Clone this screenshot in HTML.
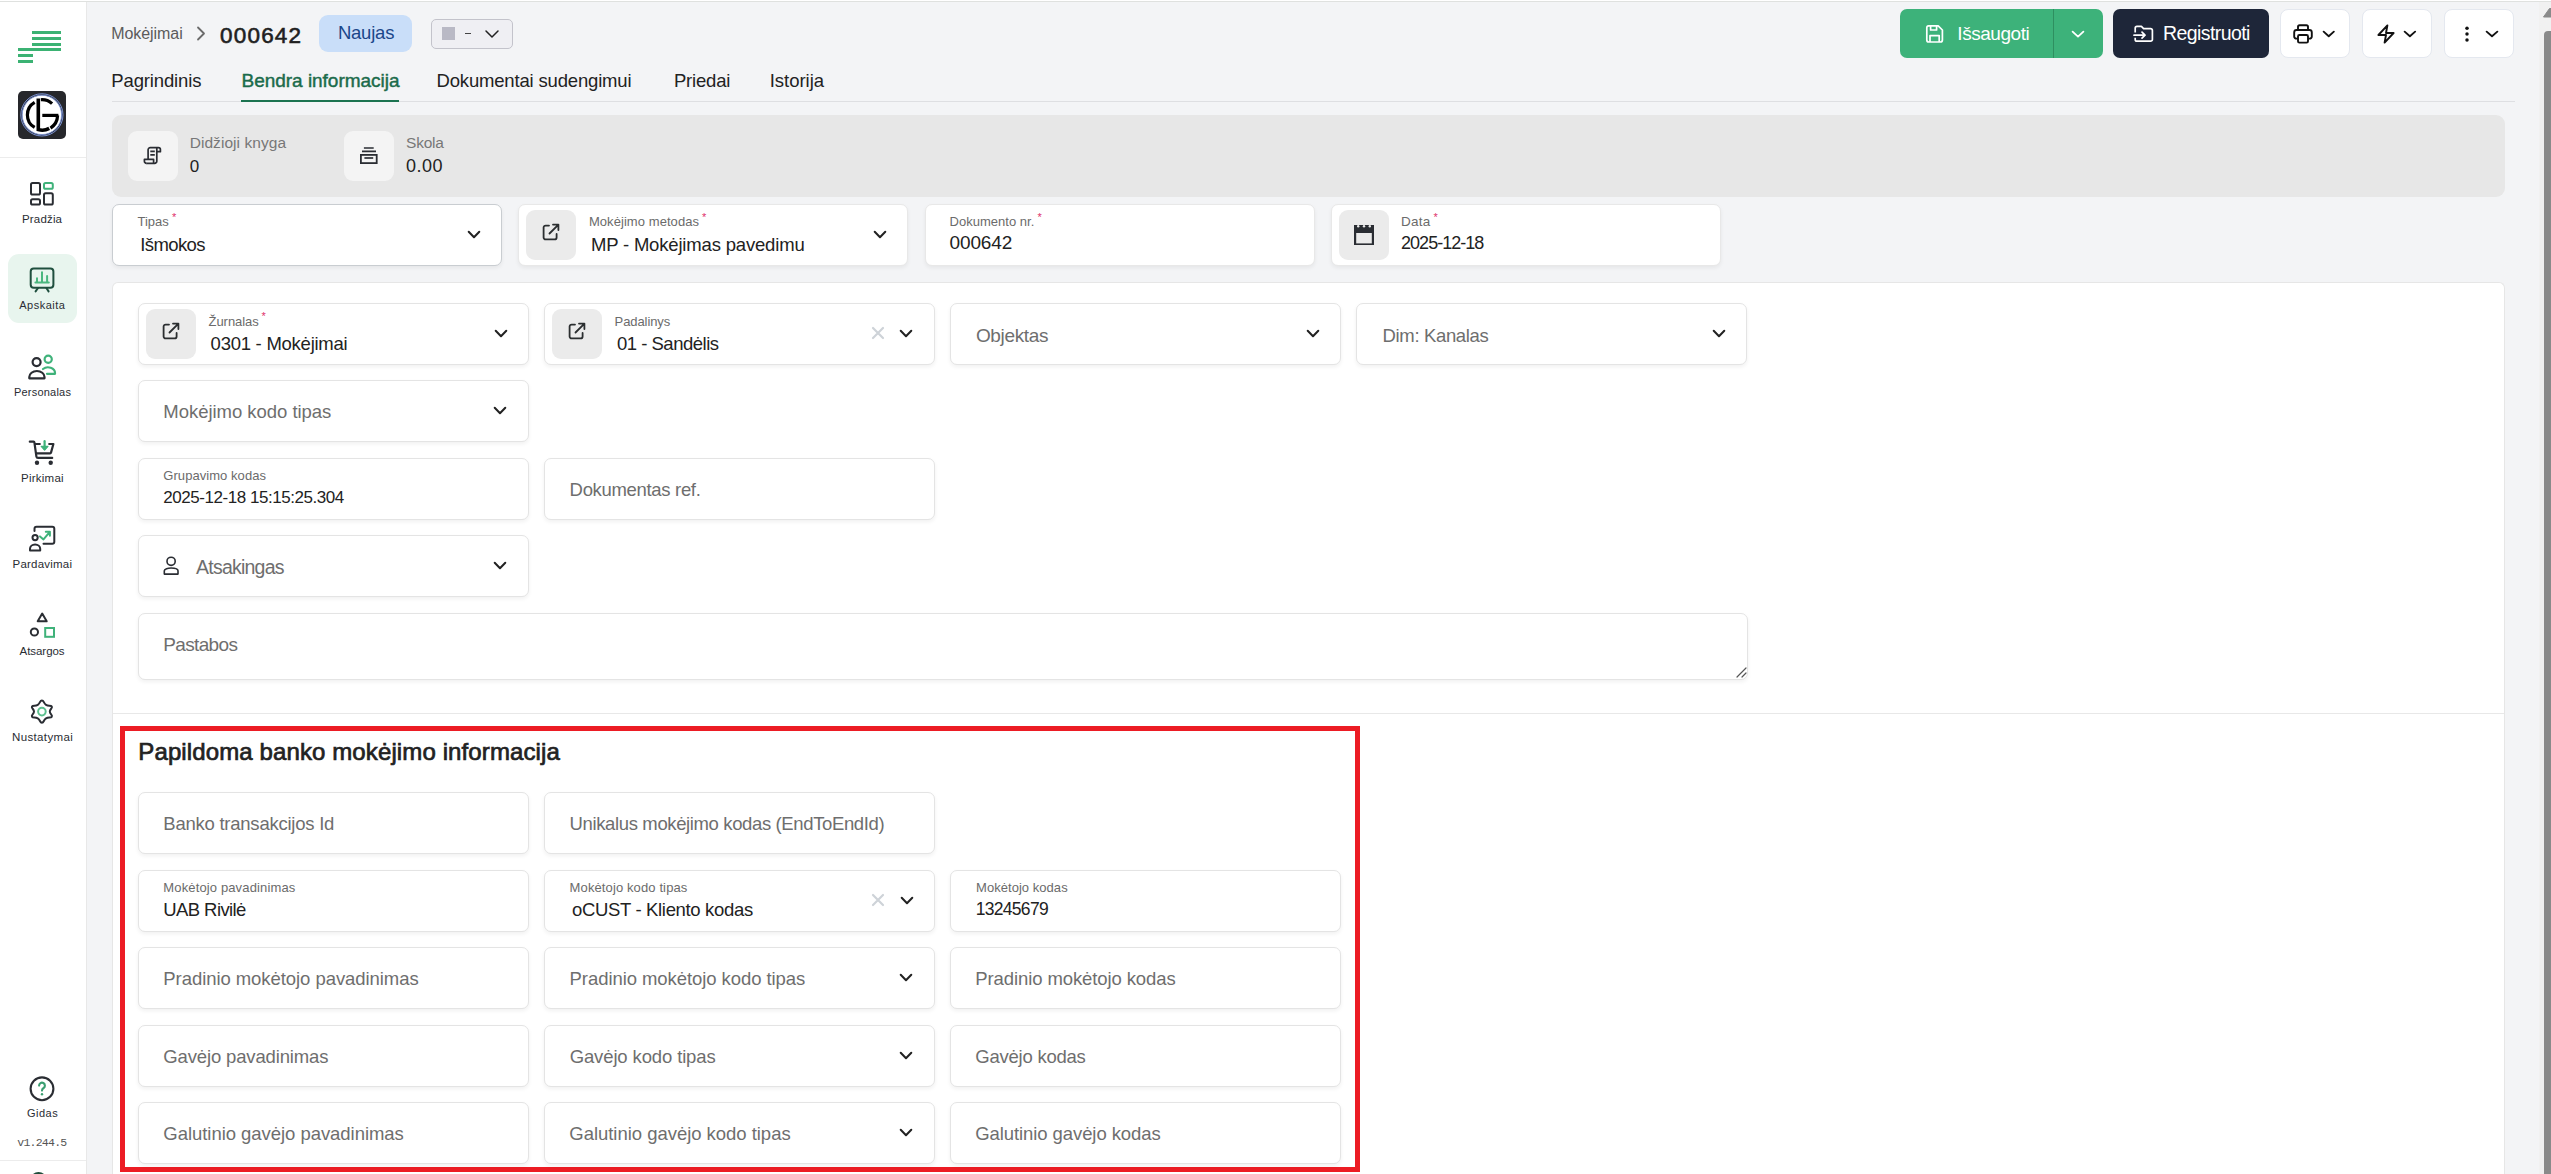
<!DOCTYPE html>
<html><head><meta charset="utf-8"><style>
html,body{margin:0;padding:0}
body{width:2551px;height:1174px;overflow:hidden;position:relative;background:#f3f4f6;font-family:"Liberation Sans",sans-serif}
body>div{position:absolute}
.t{position:absolute;white-space:nowrap}
</style></head><body>
<div style="left:0;top:0;width:2551px;height:1px;background:#fff"></div>
<div style="left:0;top:1px;width:2551px;height:1px;background:#dfe1df"></div>
<div style="left:0px;top:2px;width:86px;height:1172px;background:#fff"></div>
<div style="left:86px;top:2px;width:1px;height:1172px;background:#e8e8e8"></div>
<div style="left:0px;top:157px;width:86px;height:1px;background:#ececec"></div>
<div style="left:0px;top:1160px;width:86px;height:1px;background:#ececec"></div>
<div style="left:8px;top:254px;width:69px;height:69px;background:#e8f5ee;border-radius:11px"></div>
<span class="t" style="left:22.00px;top:212.90px;font-size:11.5px;line-height:12px;font-weight:400;letter-spacing:0.167px;color:#2a2d33">Pradžia</span>
<span class="t" style="left:19.20px;top:300.00px;font-size:11.0px;line-height:11px;font-weight:400;letter-spacing:0.514px;color:#2a2d33">Apskaita</span>
<span class="t" style="left:13.90px;top:386.50px;font-size:11.0px;line-height:11px;font-weight:400;letter-spacing:0.222px;color:#2a2d33">Personalas</span>
<span class="t" style="left:21.10px;top:471.90px;font-size:11.5px;line-height:12px;font-weight:400;letter-spacing:0.229px;color:#2a2d33">Pirkimai</span>
<span class="t" style="left:12.50px;top:557.90px;font-size:11.5px;line-height:12px;font-weight:400;letter-spacing:0.222px;color:#2a2d33">Pardavimai</span>
<span class="t" style="left:19.50px;top:645.20px;font-size:11.5px;line-height:12px;font-weight:400;letter-spacing:-0.043px;color:#2a2d33">Atsargos</span>
<span class="t" style="left:12.10px;top:731.00px;font-size:11.5px;line-height:12px;font-weight:400;letter-spacing:0.344px;color:#2a2d33">Nustatymai</span>
<span class="t" style="left:27.00px;top:1108.10px;font-size:11.0px;line-height:11px;font-weight:400;letter-spacing:0.500px;color:#2a2d33">Gidas</span>
<span class="t" style="left:17.30px;top:1137.00px;font-size:11.5px;line-height:12px;font-weight:400;letter-spacing:-0.757px;color:#555;font-family:'Liberation Mono',monospace">v1.244.5</span>
<span class="t" style="left:111.30px;top:25.50px;font-size:16.0px;line-height:16px;font-weight:400;letter-spacing:-0.075px;color:#5b5b5b">Mokėjimai</span>
<svg style="position:absolute;left:196px;top:26px;" width="11" height="15" viewBox="0 0 11 15" fill="none"><path d="M2 1.5 L8 7.5 L2 13.5" stroke="#6b6b6b" stroke-width="1.8" stroke-linecap="round" stroke-linejoin="round"/></svg>
<span class="t" style="left:220.00px;top:23.60px;font-size:22.5px;line-height:23px;font-weight:400;letter-spacing:1.200px;color:#1f1f1f;-webkit-text-stroke:0.6px #1f1f1f">000642</span>
<div style="left:319px;top:15px;width:93px;height:37px;background:#c9def9;border-radius:9px"></div>
<span class="t" style="left:337.90px;top:23.00px;font-size:18.5px;line-height:19px;font-weight:400;letter-spacing:-0.220px;color:#1b478a">Naujas</span>
<div style="left:431px;top:19px;width:80px;height:28px;background:#efeff3;border:1px solid #c3c3cb;border-radius:5px"></div>
<div style="left:442px;top:27px;width:13px;height:13px;background:#b9b9c5"></div>
<div style="left:465px;top:32.6px;width:6px;height:1.4px;background:#444"></div>
<svg style="position:absolute;left:484px;top:28px;" width="16" height="12" viewBox="0 0 16 12" fill="none"><path d="M2 3 L8 9 L14 3" stroke="#222" stroke-width="1.5" stroke-linecap="round" stroke-linejoin="round"/></svg>
<span class="t" style="left:111.30px;top:71.00px;font-size:18.5px;line-height:19px;font-weight:400;letter-spacing:-0.140px;color:#222">Pagrindinis</span>
<span class="t" style="left:241.50px;top:71.00px;font-size:19.0px;line-height:19px;font-weight:400;letter-spacing:-0.024px;color:#1b6b4b;-webkit-text-stroke:0.45px #1b6b4b">Bendra informacija</span>
<span class="t" style="left:436.50px;top:71.00px;font-size:18.5px;line-height:19px;font-weight:400;letter-spacing:-0.170px;color:#222">Dokumentai sudengimui</span>
<span class="t" style="left:673.90px;top:71.00px;font-size:18.5px;line-height:19px;font-weight:400;letter-spacing:-0.183px;color:#222">Priedai</span>
<span class="t" style="left:769.70px;top:71.00px;font-size:18.5px;line-height:19px;font-weight:400;letter-spacing:-0.014px;color:#222">Istorija</span>
<div style="left:112px;top:101px;width:2403px;height:1px;background:#dedfe2"></div>
<div style="left:241px;top:100px;width:158px;height:2px;background:#1b7350"></div>
<div style="left:1900px;top:9px;width:203px;height:49px;background:#3db27a;border-radius:7px"></div>
<div style="left:2053px;top:9px;width:1px;height:49px;background:#2e8f60"></div>
<span class="t" style="left:1957.30px;top:24.20px;font-size:19.0px;line-height:19px;font-weight:400;letter-spacing:-0.450px;color:#fff">Išsaugoti</span>
<div style="left:2113px;top:9px;width:156px;height:49px;background:#1e2639;border-radius:7px"></div>
<span class="t" style="left:2162.90px;top:23.20px;font-size:19.5px;line-height:20px;font-weight:400;letter-spacing:-0.570px;color:#fff">Registruoti</span>
<div style="left:2280px;top:9px;width:70px;height:49px;background:#fff;border:1px solid #e4e8ef;border-radius:8px;box-sizing:border-box"></div>
<div style="left:2362px;top:9px;width:70px;height:49px;background:#fff;border:1px solid #e4e8ef;border-radius:8px;box-sizing:border-box"></div>
<div style="left:2444px;top:9px;width:70px;height:49px;background:#fff;border:1px solid #e4e8ef;border-radius:8px;box-sizing:border-box"></div>
<div style="left:112px;top:115px;width:2393px;height:82px;background:#e7e7e7;border-radius:9px"></div>
<div style="left:128px;top:131px;width:50px;height:50px;background:#f4f4f4;border-radius:9px"></div>
<div style="left:344px;top:131px;width:50px;height:50px;background:#f4f4f4;border-radius:9px"></div>
<span class="t" style="left:189.70px;top:134.50px;font-size:15.5px;line-height:16px;font-weight:400;letter-spacing:0.054px;color:#777">Didžioji knyga</span>
<span class="t" style="left:189.70px;top:157.70px;font-size:17px;line-height:17px;font-weight:400;letter-spacing:0.000px;color:#222">0</span>
<span class="t" style="left:406.00px;top:134.50px;font-size:15.5px;line-height:16px;font-weight:400;letter-spacing:-0.200px;color:#777">Skola</span>
<span class="t" style="left:406.00px;top:156.70px;font-size:18.0px;line-height:18px;font-weight:400;letter-spacing:0.500px;color:#222">0.00</span>
<div style="left:112px;top:204px;width:390px;height:62px;background:#fff;border:1px solid #c9cdd1;border-radius:7px;box-sizing:border-box;box-shadow:0 2px 4px rgba(0,0,0,0.06);"></div>
<span class="t" style="left:137.50px;top:215.00px;font-size:13.0px;line-height:13px;font-weight:400;letter-spacing:-0.025px;color:#6b6b6b">Tipas</span>
<span class="t" style="left:140.20px;top:235.20px;font-size:18.5px;line-height:19px;font-weight:400;letter-spacing:-0.583px;color:#222">Išmokos</span>
<div style="left:518px;top:204px;width:390px;height:62px;background:#fff;border:1px solid #e8e8e8;border-radius:7px;box-sizing:border-box;box-shadow:0 2px 4px rgba(0,0,0,0.06);"></div>
<div style="left:526px;top:210px;width:50px;height:50px;background:#ebebeb;border-radius:9px"></div>
<span class="t" style="left:588.90px;top:215.00px;font-size:13.0px;line-height:13px;font-weight:400;letter-spacing:0.067px;color:#6b6b6b">Mokėjimo metodas</span>
<span class="t" style="left:590.90px;top:235.20px;font-size:18.5px;line-height:19px;font-weight:400;letter-spacing:-0.173px;color:#222">MP - Mokėjimas pavedimu</span>
<div style="left:925px;top:204px;width:390px;height:62px;background:#fff;border:1px solid #e8e8e8;border-radius:7px;box-sizing:border-box;box-shadow:0 2px 4px rgba(0,0,0,0.06);"></div>
<span class="t" style="left:949.60px;top:215.00px;font-size:13.0px;line-height:13px;font-weight:400;letter-spacing:0.017px;color:#6b6b6b">Dokumento nr.</span>
<span class="t" style="left:949.60px;top:233.30px;font-size:19.0px;line-height:19px;font-weight:400;letter-spacing:-0.160px;color:#222">000642</span>
<div style="left:1331px;top:204px;width:390px;height:62px;background:#fff;border:1px solid #e8e8e8;border-radius:7px;box-sizing:border-box;box-shadow:0 2px 4px rgba(0,0,0,0.06);"></div>
<div style="left:1339px;top:210px;width:50px;height:50px;background:#ebebeb;border-radius:9px"></div>
<span class="t" style="left:1401.00px;top:214.50px;font-size:13.5px;line-height:14px;font-weight:400;letter-spacing:0.267px;color:#6b6b6b">Data</span>
<span class="t" style="left:1401.00px;top:234.30px;font-size:18.0px;line-height:18px;font-weight:400;letter-spacing:-0.967px;color:#222">2025-12-18</span>
<div style="left:112px;top:282px;width:2393px;height:892px;background:#fff;border:1px solid #e6e6e6;border-bottom:none;box-sizing:border-box;border-radius:6px 6px 0 0"></div>
<div style="left:113px;top:713px;width:2391px;height:1px;background:#e8e8e8"></div>
<div style="left:138px;top:303px;width:391px;height:62px;background:#fff;border:1px solid #e4e4e4;border-radius:7px;box-sizing:border-box;box-shadow:0 2px 4px rgba(0,0,0,0.06);"></div>
<div style="left:146px;top:309px;width:50px;height:50px;background:#ebebeb;border-radius:9px"></div>
<span class="t" style="left:208.60px;top:314.70px;font-size:13.0px;line-height:13px;font-weight:400;letter-spacing:-0.071px;color:#6b6b6b">Žurnalas</span>
<span class="t" style="left:210.60px;top:334.40px;font-size:18.5px;line-height:19px;font-weight:400;letter-spacing:-0.253px;color:#222">0301 - Mokėjimai</span>
<div style="left:544px;top:303px;width:391px;height:62px;background:#fff;border:1px solid #e4e4e4;border-radius:7px;box-sizing:border-box;box-shadow:0 2px 4px rgba(0,0,0,0.06);"></div>
<div style="left:552px;top:309px;width:50px;height:50px;background:#ebebeb;border-radius:9px"></div>
<span class="t" style="left:614.60px;top:314.70px;font-size:13.0px;line-height:13px;font-weight:400;letter-spacing:-0.087px;color:#6b6b6b">Padalinys</span>
<span class="t" style="left:616.90px;top:334.40px;font-size:18.5px;line-height:19px;font-weight:400;letter-spacing:-0.483px;color:#222">01 - Sandėlis</span>
<div style="left:950px;top:303px;width:391px;height:62px;background:#fff;border:1px solid #e4e4e4;border-radius:7px;box-sizing:border-box;box-shadow:0 2px 4px rgba(0,0,0,0.06);"></div>
<span class="t" style="left:975.90px;top:325.50px;font-size:19.0px;line-height:19px;font-weight:400;letter-spacing:-0.343px;color:#6e6e6e">Objektas</span>
<div style="left:1356px;top:303px;width:391px;height:62px;background:#fff;border:1px solid #e4e4e4;border-radius:7px;box-sizing:border-box;box-shadow:0 2px 4px rgba(0,0,0,0.06);"></div>
<span class="t" style="left:1382.60px;top:325.50px;font-size:18.5px;line-height:19px;font-weight:400;letter-spacing:-0.355px;color:#6e6e6e">Dim: Kanalas</span>
<div style="left:138px;top:380px;width:391px;height:62px;background:#fff;border:1px solid #e4e4e4;border-radius:7px;box-sizing:border-box;box-shadow:0 2px 4px rgba(0,0,0,0.06);"></div>
<span class="t" style="left:163.30px;top:401.90px;font-size:18.5px;line-height:19px;font-weight:400;letter-spacing:-0.033px;color:#6e6e6e">Mokėjimo kodo tipas</span>
<div style="left:138px;top:458px;width:391px;height:62px;background:#fff;border:1px solid #e4e4e4;border-radius:7px;box-sizing:border-box;box-shadow:0 2px 4px rgba(0,0,0,0.06);"></div>
<span class="t" style="left:163.30px;top:469.10px;font-size:13.0px;line-height:13px;font-weight:400;letter-spacing:0.057px;color:#6b6b6b">Grupavimo kodas</span>
<span class="t" style="left:163.30px;top:489.10px;font-size:17.0px;line-height:17px;font-weight:400;letter-spacing:-0.459px;color:#222">2025-12-18 15:15:25.304</span>
<div style="left:544px;top:458px;width:391px;height:62px;background:#fff;border:1px solid #e4e4e4;border-radius:7px;box-sizing:border-box;box-shadow:0 2px 4px rgba(0,0,0,0.06);"></div>
<span class="t" style="left:569.60px;top:480.30px;font-size:18.5px;line-height:19px;font-weight:400;letter-spacing:-0.321px;color:#6e6e6e">Dokumentas ref.</span>
<div style="left:138px;top:535px;width:391px;height:62px;background:#fff;border:1px solid #e4e4e4;border-radius:7px;box-sizing:border-box;box-shadow:0 2px 4px rgba(0,0,0,0.06);"></div>
<span class="t" style="left:196.10px;top:556.90px;font-size:19.5px;line-height:20px;font-weight:400;letter-spacing:-0.778px;color:#6e6e6e">Atsakingas</span>
<div style="left:138px;top:613px;width:1610px;height:67px;background:#fff;border:1px solid #e4e4e4;border-radius:7px;box-sizing:border-box;box-shadow:0 2px 4px rgba(0,0,0,0.06);"></div>
<span class="t" style="left:163.30px;top:635.40px;font-size:19.0px;line-height:19px;font-weight:400;letter-spacing:-0.657px;color:#6e6e6e">Pastabos</span>
<div style="left:120px;top:726px;width:1240px;height:446px;border:5px solid #ec1c24;box-sizing:border-box"></div>
<span class="t" style="left:138.30px;top:739.50px;font-size:24.0px;line-height:24px;font-weight:400;letter-spacing:0.114px;color:#222;-webkit-text-stroke:0.7px #222">Papildoma banko mokėjimo informacija</span>
<div style="left:138px;top:792px;width:391px;height:62px;background:#fff;border:1px solid #e4e4e4;border-radius:7px;box-sizing:border-box;box-shadow:0 2px 4px rgba(0,0,0,0.06);"></div>
<span class="t" style="left:163.30px;top:814.40px;font-size:18.5px;line-height:19px;font-weight:400;letter-spacing:-0.240px;color:#6e6e6e">Banko transakcijos Id</span>
<div style="left:544px;top:792px;width:391px;height:62px;background:#fff;border:1px solid #e4e4e4;border-radius:7px;box-sizing:border-box;box-shadow:0 2px 4px rgba(0,0,0,0.06);"></div>
<span class="t" style="left:569.60px;top:814.40px;font-size:18.5px;line-height:19px;font-weight:400;letter-spacing:-0.371px;color:#6e6e6e">Unikalus mokėjimo kodas (EndToEndId)</span>
<div style="left:138px;top:870px;width:391px;height:62px;background:#fff;border:1px solid #e4e4e4;border-radius:7px;box-sizing:border-box;box-shadow:0 2px 4px rgba(0,0,0,0.06);"></div>
<span class="t" style="left:163.30px;top:881.10px;font-size:13.0px;line-height:13px;font-weight:400;letter-spacing:0.137px;color:#6b6b6b">Mokėtojo pavadinimas</span>
<span class="t" style="left:163.30px;top:899.70px;font-size:18.5px;line-height:19px;font-weight:400;letter-spacing:-0.589px;color:#222">UAB Rivilė</span>
<div style="left:544px;top:870px;width:391px;height:62px;background:#fff;border:1px solid #e4e4e4;border-radius:7px;box-sizing:border-box;box-shadow:0 2px 4px rgba(0,0,0,0.06);"></div>
<span class="t" style="left:569.60px;top:881.10px;font-size:13.0px;line-height:13px;font-weight:400;letter-spacing:0.117px;color:#6b6b6b">Mokėtojo kodo tipas</span>
<span class="t" style="left:572.00px;top:899.70px;font-size:18.5px;line-height:19px;font-weight:400;letter-spacing:-0.335px;color:#222">oCUST - Kliento kodas</span>
<div style="left:950px;top:870px;width:391px;height:62px;background:#fff;border:1px solid #e4e4e4;border-radius:7px;box-sizing:border-box;box-shadow:0 2px 4px rgba(0,0,0,0.06);"></div>
<span class="t" style="left:976.00px;top:881.10px;font-size:13.0px;line-height:13px;font-weight:400;letter-spacing:0.046px;color:#6b6b6b">Mokėtojo kodas</span>
<span class="t" style="left:975.70px;top:900.10px;font-size:17.5px;line-height:18px;font-weight:400;letter-spacing:-0.700px;color:#222">13245679</span>
<div style="left:138px;top:947px;width:391px;height:62px;background:#fff;border:1px solid #e4e4e4;border-radius:7px;box-sizing:border-box;box-shadow:0 2px 4px rgba(0,0,0,0.06);"></div>
<span class="t" style="left:163.30px;top:969.00px;font-size:18.5px;line-height:19px;font-weight:400;letter-spacing:-0.061px;color:#6e6e6e">Pradinio mokėtojo pavadinimas</span>
<div style="left:544px;top:947px;width:391px;height:62px;background:#fff;border:1px solid #e4e4e4;border-radius:7px;box-sizing:border-box;box-shadow:0 2px 4px rgba(0,0,0,0.06);"></div>
<span class="t" style="left:569.60px;top:969.00px;font-size:18.5px;line-height:19px;font-weight:400;letter-spacing:-0.070px;color:#6e6e6e">Pradinio mokėtojo kodo tipas</span>
<div style="left:950px;top:947px;width:391px;height:62px;background:#fff;border:1px solid #e4e4e4;border-radius:7px;box-sizing:border-box;box-shadow:0 2px 4px rgba(0,0,0,0.06);"></div>
<span class="t" style="left:975.30px;top:969.00px;font-size:18.5px;line-height:19px;font-weight:400;letter-spacing:-0.100px;color:#6e6e6e">Pradinio mokėtojo kodas</span>
<div style="left:138px;top:1025px;width:391px;height:62px;background:#fff;border:1px solid #e4e4e4;border-radius:7px;box-sizing:border-box;box-shadow:0 2px 4px rgba(0,0,0,0.06);"></div>
<span class="t" style="left:163.30px;top:1047.00px;font-size:18.5px;line-height:19px;font-weight:400;letter-spacing:-0.147px;color:#6e6e6e">Gavėjo pavadinimas</span>
<div style="left:544px;top:1025px;width:391px;height:62px;background:#fff;border:1px solid #e4e4e4;border-radius:7px;box-sizing:border-box;box-shadow:0 2px 4px rgba(0,0,0,0.06);"></div>
<span class="t" style="left:569.70px;top:1047.00px;font-size:18.5px;line-height:19px;font-weight:400;letter-spacing:-0.131px;color:#6e6e6e">Gavėjo kodo tipas</span>
<div style="left:950px;top:1025px;width:391px;height:62px;background:#fff;border:1px solid #e4e4e4;border-radius:7px;box-sizing:border-box;box-shadow:0 2px 4px rgba(0,0,0,0.06);"></div>
<span class="t" style="left:975.30px;top:1047.00px;font-size:18.5px;line-height:19px;font-weight:400;letter-spacing:-0.236px;color:#6e6e6e">Gavėjo kodas</span>
<div style="left:138px;top:1102px;width:391px;height:62px;background:#fff;border:1px solid #e4e4e4;border-radius:7px;box-sizing:border-box;box-shadow:0 2px 4px rgba(0,0,0,0.06);"></div>
<span class="t" style="left:163.30px;top:1124.40px;font-size:18.5px;line-height:19px;font-weight:400;letter-spacing:-0.041px;color:#6e6e6e">Galutinio gavėjo pavadinimas</span>
<div style="left:544px;top:1102px;width:391px;height:62px;background:#fff;border:1px solid #e4e4e4;border-radius:7px;box-sizing:border-box;box-shadow:0 2px 4px rgba(0,0,0,0.06);"></div>
<span class="t" style="left:569.30px;top:1124.40px;font-size:18.5px;line-height:19px;font-weight:400;letter-spacing:-0.031px;color:#6e6e6e">Galutinio gavėjo kodo tipas</span>
<div style="left:950px;top:1102px;width:391px;height:62px;background:#fff;border:1px solid #e4e4e4;border-radius:7px;box-sizing:border-box;box-shadow:0 2px 4px rgba(0,0,0,0.06);"></div>
<span class="t" style="left:975.30px;top:1124.40px;font-size:18.5px;line-height:19px;font-weight:400;letter-spacing:-0.086px;color:#6e6e6e">Galutinio gavėjo kodas</span>
<div style="left:32px;top:31.2px;width:29px;height:2.9px;background:#3bb273"></div>
<div style="left:32px;top:37px;width:29px;height:2.9px;background:#3bb273"></div>
<div style="left:32px;top:42.7px;width:29px;height:2.9px;background:#3bb273"></div>
<div style="left:18px;top:48.2px;width:43px;height:2.9px;background:#3bb273"></div>
<div style="left:18px;top:54.1px;width:15px;height:2.9px;background:#3bb273"></div>
<div style="left:18px;top:59.8px;width:15px;height:2.9px;background:#3bb273"></div>
<svg style="position:absolute;left:16px;top:89px;" width="52" height="52" viewBox="0 0 52 52" fill="none"><rect x="2" y="2" width="48" height="48" rx="5" fill="#26272b"/><circle cx="25.9" cy="25.9" r="21.1" stroke="#7d95d8" stroke-width="1"/><circle cx="25.9" cy="25.9" r="19.7" fill="#fff" stroke="#7d95d8" stroke-width="0.9"/><path d="M18.65 13.34 A14.5 14.5 0 0 0 18.65 38.46" stroke="#000" stroke-width="3.2"/><path d="M22.3 9.6 V40.6 Q28 42.2 33.2 39.4" stroke="#000" stroke-width="3.6"/><path d="M24.84 10.74 A15.2 15.2 0 0 1 36.07 14.6" stroke="#000" stroke-width="3.2"/><path d="M26.3 26.4 H42.4" stroke="#000" stroke-width="3.2"/><path d="M41.6 26.4 A15.8 15.8 0 0 1 34.5 39.15" stroke="#000" stroke-width="3.2"/></svg>
<svg style="position:absolute;left:26px;top:176px;" width="32" height="36" viewBox="0 0 32 36" fill="none"><rect x="5" y="7" width="9" height="11.6" rx="1.6" stroke="#2a2d33" stroke-width="2"/><rect x="5" y="23.2" width="9" height="5.4" rx="1.6" stroke="#2a2d33" stroke-width="2"/><rect x="18" y="7.1" width="8.8" height="5.7" rx="1.6" stroke="#3fb27a" stroke-width="2"/><rect x="18" y="17.3" width="8.8" height="11.3" rx="1.6" stroke="#2a2d33" stroke-width="2"/></svg>
<svg style="position:absolute;left:26px;top:262px;" width="32" height="36" viewBox="0 0 32 36" fill="none"><rect x="4.7" y="6.4" width="22.7" height="19.3" rx="3" stroke="#1f4f3e" stroke-width="2"/><path d="M12 26 L9.6 29.4 M20.4 26 L22.6 29.4" stroke="#1f4f3e" stroke-width="2" stroke-linecap="round"/><path d="M9.4 20.4 H22.8 M11 20.4 V16.3 M16 20.4 V10.2 M21.1 20.4 V14" stroke="#4bb77f" stroke-width="2" stroke-linecap="round"/></svg>
<svg style="position:absolute;left:26px;top:350px;" width="34" height="34" viewBox="0 0 34 34" fill="none"><circle cx="10.6" cy="12.1" r="4" stroke="#2a2d33" stroke-width="2.2"/><path d="M3.3 28.3 V27 A7.6 6 0 0 1 18.5 27 V28.3 Z" stroke="#2a2d33" stroke-width="2.2" stroke-linejoin="round"/><circle cx="22.2" cy="9.3" r="3.6" stroke="#3fb27a" stroke-width="2.2"/><path d="M17 19 A7 5.6 0 0 1 29 23 V23.8 H21" stroke="#3fb27a" stroke-width="2.2" stroke-linejoin="round" stroke-linecap="round"/></svg>
<svg style="position:absolute;left:26px;top:436px;" width="34" height="32" viewBox="0 0 34 32" fill="none"><path d="M3.8 5.7 H7.6 A0.8 0.8 0 0 1 8.4 6.4 L10.4 20.6 A1.6 1.6 0 0 0 12 21.9 H26.2" stroke="#2a2d33" stroke-width="2.2" stroke-linecap="round" stroke-linejoin="round"/><path d="M9.5 8 H13.8 M23.2 8 H27.4 L25 16.6 A1 1 0 0 1 24 17.3 H10.5" stroke="#2a2d33" stroke-width="2.2" stroke-linecap="round" stroke-linejoin="round"/><circle cx="11" cy="26.8" r="2.2" fill="#2a2d33"/><circle cx="24.7" cy="26.8" r="2.2" fill="#2a2d33"/><path d="M18.6 5.2 V13" stroke="#3fb27a" stroke-width="2.2" stroke-linecap="round"/><path d="M15.2 10.4 L18.6 14 L22 10.4 Z" fill="#3fb27a" stroke="#3fb27a" stroke-width="1.2" stroke-linejoin="round"/></svg>
<svg style="position:absolute;left:26px;top:520px;" width="34" height="34" viewBox="0 0 34 34" fill="none"><path d="M8.5 11 V8.8 A2 2 0 0 1 10.5 6.8 H26.3 A2 2 0 0 1 28.3 8.8 V21.8 A2 2 0 0 1 26.3 23.8 H17.5" stroke="#2a2d33" stroke-width="2" stroke-linecap="round"/><circle cx="9.1" cy="17.6" r="2.6" stroke="#2a2d33" stroke-width="2"/><path d="M4 30.4 V28.8 A5.1 4.4 0 0 1 14.2 28.8 V30.4 Z" stroke="#2a2d33" stroke-width="2" stroke-linejoin="round"/><path d="M14 16.4 L17.5 19.4 L23.6 12.2 M19.8 11.8 H23.9 V15.8" stroke="#3fb27a" stroke-width="2" stroke-linecap="round" stroke-linejoin="round"/></svg>
<svg style="position:absolute;left:26px;top:606px;" width="34" height="34" viewBox="0 0 34 34" fill="none"><path d="M16.2 7.6 L20.7 15.3 H11.7 Z" stroke="#2a2d33" stroke-width="2" stroke-linejoin="round"/><circle cx="8.4" cy="26" r="3.6" stroke="#2a2d33" stroke-width="2"/><rect x="19.2" y="22" width="8.8" height="8.8" stroke="#3fb27a" stroke-width="2"/></svg>
<svg style="position:absolute;left:26px;top:695px;" width="32" height="32" viewBox="0 0 32 32" fill="none"><path d="M15.90 5.50 C18.10 5.50 17.39 8.25 20.03 9.86 C22.67 11.48 24.78 9.76 25.79 11.56 C26.80 13.36 23.80 13.91 23.80 16.60 C23.80 19.29 26.80 19.84 25.79 21.64 C24.78 23.44 22.67 21.72 20.03 23.34 C17.39 24.95 18.10 27.70 15.90 27.70 C13.70 27.70 14.41 24.95 11.77 23.34 C9.13 21.72 7.02 23.44 6.01 21.64 C5.00 19.84 8.00 19.29 8.00 16.60 C8.00 13.91 5.00 13.36 6.01 11.56 C7.02 9.76 9.13 11.48 11.77 9.86 C14.41 8.25 13.70 5.50 15.90 5.50 Z" stroke="#2a2d33" stroke-width="2" stroke-linejoin="round"/><circle cx="15.9" cy="16.6" r="3.8" stroke="#5cc08f" stroke-width="2"/></svg>
<svg style="position:absolute;left:26px;top:1073px;" width="32" height="32" viewBox="0 0 32 32" fill="none"><circle cx="16" cy="15.8" r="11.4" stroke="#2a2d33" stroke-width="2.1"/><path d="M13.1 12.6 A2.9 2.9 0 1 1 17.6 15 C16.4 15.7 16 16.3 16 17.6" stroke="#3a9e71" stroke-width="2.1" stroke-linecap="round"/><circle cx="16" cy="21.2" r="1.2" fill="#3a9e71"/></svg>
<div style="left:30px;top:1172px;width:17px;height:10px;background:#1f4d3a;border-radius:9px 9px 0 0"></div>
<svg style="position:absolute;left:140px;top:143px;" width="24" height="24" viewBox="0 0 24 24" fill="none"><path d="M8.1 16.4 V6.8 A2.2 2.2 0 0 1 10.3 4.6 H18.4 A2 2 0 0 1 20.4 6.6 V8.7 H16.8" stroke="#2a2d33" stroke-width="1.7" stroke-linejoin="round"/><path d="M16.8 5 V18.2 A2.1 2.1 0 0 1 14.7 20.3 H6.3" stroke="#2a2d33" stroke-width="1.7"/><path d="M13.6 20.3 V16.4 H4.4 V18.2 A2.1 2.1 0 0 0 6.5 20.3" stroke="#2a2d33" stroke-width="1.7" stroke-linejoin="round"/><path d="M10.3 8.4 H14.8 M10.3 11.8 H14.8" stroke="#2a2d33" stroke-width="1.7"/></svg>
<svg style="position:absolute;left:356px;top:143px;" width="26" height="24" viewBox="0 0 26 24" fill="none"><path d="M7.9 5 H17.7 M6 8.3 H20" stroke="#2a2d33" stroke-width="1.7"/><rect x="4.9" y="11.9" width="15.8" height="8.2" stroke="#2a2d33" stroke-width="1.8"/><path d="M8.4 15 H17.2" stroke="#2a2d33" stroke-width="1.7"/></svg>
<svg style="position:absolute;left:542px;top:223px;" width="18" height="18" viewBox="0 0 18 18" fill="none"><path d="M7 2.6 H3.6 A2 2 0 0 0 1.6 4.6 V14.4 A2 2 0 0 0 3.6 16.4 H12.6 A2 2 0 0 0 14.6 14.4 V11" stroke="#2b2e30" stroke-width="1.8" stroke-linecap="round"/><path d="M7.5 10.5 L16.2 1.8 M11 1.6 H16.4 V7" stroke="#2b2e30" stroke-width="1.8" stroke-linecap="round" stroke-linejoin="round"/></svg>
<svg style="position:absolute;left:162px;top:322px;" width="18" height="18" viewBox="0 0 18 18" fill="none"><path d="M7 2.6 H3.6 A2 2 0 0 0 1.6 4.6 V14.4 A2 2 0 0 0 3.6 16.4 H12.6 A2 2 0 0 0 14.6 14.4 V11" stroke="#2b2e30" stroke-width="1.8" stroke-linecap="round"/><path d="M7.5 10.5 L16.2 1.8 M11 1.6 H16.4 V7" stroke="#2b2e30" stroke-width="1.8" stroke-linecap="round" stroke-linejoin="round"/></svg>
<svg style="position:absolute;left:568px;top:322px;" width="18" height="18" viewBox="0 0 18 18" fill="none"><path d="M7 2.6 H3.6 A2 2 0 0 0 1.6 4.6 V14.4 A2 2 0 0 0 3.6 16.4 H12.6 A2 2 0 0 0 14.6 14.4 V11" stroke="#2b2e30" stroke-width="1.8" stroke-linecap="round"/><path d="M7.5 10.5 L16.2 1.8 M11 1.6 H16.4 V7" stroke="#2b2e30" stroke-width="1.8" stroke-linecap="round" stroke-linejoin="round"/></svg>
<svg style="position:absolute;left:1354px;top:225px;" width="20" height="20" viewBox="0 0 20 20" fill="none"><rect x="1" y="1.2" width="18" height="6.8" fill="#2a2d33"/><rect x="1" y="1.2" width="18" height="18.4" stroke="#2a2d33" stroke-width="2.4" fill="none"/><circle cx="4.2" cy="1.2" r="1.2" fill="#ebebeb"/><circle cx="10" cy="1.2" r="1.2" fill="#ebebeb"/><circle cx="15.8" cy="1.2" r="1.2" fill="#ebebeb"/></svg>
<svg style="position:absolute;left:466px;top:228.5px;" width="16" height="11" viewBox="0 0 16 11" fill="none"><path d="M2.7 2.7 L8.0 8.2 L13.3 2.7" stroke="#222" stroke-width="2" stroke-linecap="round" stroke-linejoin="round"/></svg>
<svg style="position:absolute;left:872px;top:228.5px;" width="16" height="11" viewBox="0 0 16 11" fill="none"><path d="M2.7 2.7 L8.0 8.2 L13.3 2.7" stroke="#222" stroke-width="2" stroke-linecap="round" stroke-linejoin="round"/></svg>
<svg style="position:absolute;left:492.5px;top:328px;" width="16" height="11" viewBox="0 0 16 11" fill="none"><path d="M2.7 2.7 L8.0 8.2 L13.3 2.7" stroke="#222" stroke-width="2" stroke-linecap="round" stroke-linejoin="round"/></svg>
<svg style="position:absolute;left:898px;top:328px;" width="16" height="11" viewBox="0 0 16 11" fill="none"><path d="M2.7 2.7 L8.0 8.2 L13.3 2.7" stroke="#222" stroke-width="2" stroke-linecap="round" stroke-linejoin="round"/></svg>
<svg style="position:absolute;left:1305px;top:328px;" width="16" height="11" viewBox="0 0 16 11" fill="none"><path d="M2.7 2.7 L8.0 8.2 L13.3 2.7" stroke="#222" stroke-width="2" stroke-linecap="round" stroke-linejoin="round"/></svg>
<svg style="position:absolute;left:1711px;top:328px;" width="16" height="11" viewBox="0 0 16 11" fill="none"><path d="M2.7 2.7 L8.0 8.2 L13.3 2.7" stroke="#222" stroke-width="2" stroke-linecap="round" stroke-linejoin="round"/></svg>
<svg style="position:absolute;left:492px;top:405.3px;" width="16" height="11" viewBox="0 0 16 11" fill="none"><path d="M2.7 2.7 L8.0 8.2 L13.3 2.7" stroke="#222" stroke-width="2" stroke-linecap="round" stroke-linejoin="round"/></svg>
<svg style="position:absolute;left:492px;top:560px;" width="16" height="11" viewBox="0 0 16 11" fill="none"><path d="M2.7 2.7 L8.0 8.2 L13.3 2.7" stroke="#222" stroke-width="2" stroke-linecap="round" stroke-linejoin="round"/></svg>
<svg style="position:absolute;left:898.5px;top:895px;" width="16" height="11" viewBox="0 0 16 11" fill="none"><path d="M2.7 2.7 L8.0 8.2 L13.3 2.7" stroke="#222" stroke-width="2" stroke-linecap="round" stroke-linejoin="round"/></svg>
<svg style="position:absolute;left:898px;top:972px;" width="16" height="11" viewBox="0 0 16 11" fill="none"><path d="M2.7 2.7 L8.0 8.2 L13.3 2.7" stroke="#222" stroke-width="2" stroke-linecap="round" stroke-linejoin="round"/></svg>
<svg style="position:absolute;left:898px;top:1050px;" width="16" height="11" viewBox="0 0 16 11" fill="none"><path d="M2.7 2.7 L8.0 8.2 L13.3 2.7" stroke="#222" stroke-width="2" stroke-linecap="round" stroke-linejoin="round"/></svg>
<svg style="position:absolute;left:898px;top:1127px;" width="16" height="11" viewBox="0 0 16 11" fill="none"><path d="M2.7 2.7 L8.0 8.2 L13.3 2.7" stroke="#222" stroke-width="2" stroke-linecap="round" stroke-linejoin="round"/></svg>
<svg style="position:absolute;left:870.5px;top:326.2px;" width="14" height="14" viewBox="0 0 14 14" fill="none"><path d="M2 2 L12 12 M12 2 L2 12" stroke="#ced3d8" stroke-width="2.2" stroke-linecap="round"/></svg>
<svg style="position:absolute;left:871px;top:893px;" width="14" height="14" viewBox="0 0 14 14" fill="none"><path d="M2 2 L12 12 M12 2 L2 12" stroke="#ced3d8" stroke-width="2.2" stroke-linecap="round"/></svg>
<svg style="position:absolute;left:160px;top:554px;" width="22" height="24" viewBox="0 0 22 24" fill="none"><circle cx="11.1" cy="7.3" r="4.1" stroke="#2a2d33" stroke-width="1.6"/><path d="M4.3 20.1 V16.8 C4.3 14.8 8 14 11.1 14 C14.2 14 18 14.8 18 16.8 V20.1 Z" stroke="#2a2d33" stroke-width="1.6" stroke-linejoin="round"/></svg>
<svg style="position:absolute;left:1734px;top:665px;" width="14" height="14" viewBox="0 0 14 14" fill="none"><path d="M12 3 L3 12 M12 8 L8 12" stroke="#555" stroke-width="1.2" stroke-linecap="round"/></svg>
<svg style="position:absolute;left:1925px;top:24px;" width="20" height="20" viewBox="0 0 20 20" fill="none"><path d="M3.6 1.8 H13.2 L17.4 6 V16 A2 2 0 0 1 15.4 18 H3.8 A2 2 0 0 1 1.8 16 V3.8 A2 2 0 0 1 3.6 1.8 Z" stroke="#fff" stroke-width="1.7" stroke-linejoin="round"/><path d="M5.6 2 V6 H11.6 V2 M5 18 V11.6 H14.2 V18" stroke="#fff" stroke-width="1.7" stroke-linejoin="round"/></svg>
<svg style="position:absolute;left:2070px;top:29px;" width="16" height="10.3" viewBox="0 0 16 10.3" fill="none"><path d="M2.6 2.6 L8.0 7.6000000000000005 L13.4 2.6" stroke="#fff" stroke-width="1.8" stroke-linecap="round" stroke-linejoin="round"/></svg>
<svg style="position:absolute;left:2132px;top:24px;" width="22" height="20" viewBox="0 0 22 20" fill="none"><path d="M3.2 8.6 V4.2 A1.8 1.8 0 0 1 5 2.4 H9.4 L11.6 4.6 H18.6 A1.8 1.8 0 0 1 20.4 6.4 V15.4 A1.8 1.8 0 0 1 18.6 17.2 H5 A1.8 1.8 0 0 1 3.2 15.4 V13.8" stroke="#fff" stroke-width="1.7" stroke-linejoin="round"/><path d="M2 11.2 H13 M10 8.2 L13 11.2 L10 14.2" stroke="#fff" stroke-width="1.7" stroke-linecap="round" stroke-linejoin="round"/></svg>
<svg style="position:absolute;left:2292px;top:23px;" width="22" height="22" viewBox="0 0 22 22" fill="none"><path d="M6 7 V3.8 A1.6 1.6 0 0 1 7.6 2.2 H14.4 A1.6 1.6 0 0 1 16 3.8 V7" stroke="#111" stroke-width="1.9"/><path d="M6 15.6 H4.4 A2.2 2.2 0 0 1 2.2 13.4 V9.4 A2.4 2.4 0 0 1 4.6 7 H17.4 A2.4 2.4 0 0 1 19.8 9.4 V13.4 A2.2 2.2 0 0 1 17.6 15.6 H16" stroke="#111" stroke-width="1.9"/><rect x="6" y="12" width="10" height="7.6" rx="1.4" stroke="#111" stroke-width="1.9"/></svg>
<svg style="position:absolute;left:2320.5px;top:29px;" width="15.5" height="10" viewBox="0 0 15.5 10" fill="none"><path d="M2.6500000000000004 2.6500000000000004 L7.75 7.25 L12.850000000000001 2.6500000000000004" stroke="#111" stroke-width="1.9" stroke-linecap="round" stroke-linejoin="round"/></svg>
<svg style="position:absolute;left:2375px;top:23px;" width="22" height="22" viewBox="0 0 22 22" fill="none"><path d="M12.4 2.4 L3.4 12 H11 L9.6 19.6 L18.6 10 H11 Z" stroke="#111" stroke-width="1.9" stroke-linejoin="round"/></svg>
<svg style="position:absolute;left:2402.2px;top:29px;" width="15.8" height="10" viewBox="0 0 15.8 10" fill="none"><path d="M2.6500000000000004 2.6500000000000004 L7.9 7.25 L13.150000000000002 2.6500000000000004" stroke="#111" stroke-width="1.9" stroke-linecap="round" stroke-linejoin="round"/></svg>
<svg style="position:absolute;left:2462px;top:23px;" width="10" height="22" viewBox="0 0 10 22" fill="none"><circle cx="5" cy="5.3" r="1.75" fill="#111"/><circle cx="5" cy="11" r="1.75" fill="#111"/><circle cx="5" cy="16.9" r="1.75" fill="#111"/></svg>
<svg style="position:absolute;left:2484px;top:29px;" width="16" height="10" viewBox="0 0 16 10" fill="none"><path d="M2.6500000000000004 2.6500000000000004 L8.0 7.25 L13.350000000000001 2.6500000000000004" stroke="#111" stroke-width="1.9" stroke-linecap="round" stroke-linejoin="round"/></svg>
<span class="t" style="left:172.0px;top:212px;font-size:11px;line-height:11px;color:#e0306b">*</span>
<span class="t" style="left:702.1px;top:212px;font-size:11px;line-height:11px;color:#e0306b">*</span>
<span class="t" style="left:1037.5px;top:212px;font-size:11px;line-height:11px;color:#e0306b">*</span>
<span class="t" style="left:1433.5px;top:212px;font-size:11px;line-height:11px;color:#e0306b">*</span>
<span class="t" style="left:261.5px;top:311px;font-size:11px;line-height:11px;color:#e0306b">*</span>
<div style="left:2539px;top:2px;width:12px;height:1172px;background:#f1f1f1"></div>
<div style="left:2544px;top:31px;width:7px;height:1143px;background:#8a8a8a;border-radius:4px 0 0 0"></div>
<svg style="position:absolute;left:2542px;top:6px;" width="9" height="12" viewBox="0 0 9 12" fill="none"><path d="M1.5 11 L7.5 2.5 L9 2.5 L9 11 Z" fill="#8a8a8a" stroke="#8a8a8a" stroke-width="1" stroke-linejoin="round"/></svg>
</body></html>
